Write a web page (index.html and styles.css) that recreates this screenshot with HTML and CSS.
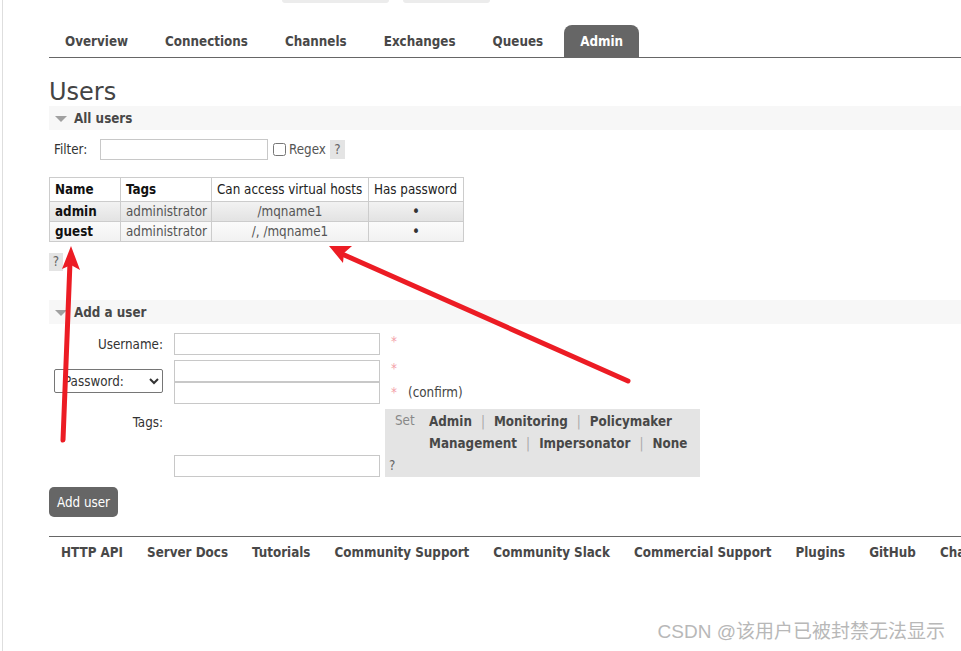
FILE: index.html
```html
<!DOCTYPE html>
<html>
<head>
<meta charset="utf-8">
<link rel="stylesheet" href="styles.css">
</head>
<body>
<div class="page">
  <div class="topstubs"><span class="stub stub-a"></span><span class="stub stub-b"></span></div>
  <ul class="tabs">
    <li>Overview</li>
    <li>Connections</li>
    <li>Channels</li>
    <li>Exchanges</li>
    <li>Queues</li>
    <li class="active">Admin</li>
  </ul>
  <h1>Users</h1>
  <div class="section-head"><span class="tri"></span>All users</div>
  <div class="filter">
    <label>Filter:</label>
    <input type="text" class="filter-input">
    <input type="checkbox" class="cb">
    <span class="regex">Regex</span>
    <span class="help">?</span>
  </div>
  <table class="users">
    <thead>
      <tr><th class="c1 b">Name</th><th class="c2 b">Tags</th><th class="c3">Can access virtual hosts</th><th class="c4">Has password</th></tr>
    </thead>
    <tbody>
      <tr class="alt1"><td class="b name">admin</td><td class="tag">administrator</td><td class="ctr">/mqname1</td><td class="ctr dot">•</td></tr>
      <tr class="alt2"><td class="b name">guest</td><td class="tag">administrator</td><td class="ctr">/, /mqname1</td><td class="ctr dot">•</td></tr>
    </tbody>
  </table>
  <div class="help help-under">?</div>
  <div class="section-head add-head"><span class="tri"></span>Add a user</div>
  <div class="form">
    <div class="lbl">Username:</div>
    <div class="field"><input type="text" class="inp"></div>
    <div class="extra"><span class="star">*</span></div>

    <div class="lbl lbl-select"><select class="sel"><option>Password:</option></select></div>
    <div class="field"><input type="password" class="inp"><input type="password" class="inp"></div>
    <div class="extra pw-extra"><div class="line"><span class="star">*</span></div><div class="line"><span class="star">*</span><span class="confirm">(confirm)</span></div></div>

    <div class="lbl lbl-tags">Tags:</div>
    <div class="field field-bottom"><input type="text" class="inp"></div>
    <div class="tagbox">
      <div class="tagrow">
        <span class="set">Set</span>
        <div class="taglinks">
          <span class="tl">Admin</span><span class="sep">|</span><span class="tl">Monitoring</span><span class="sep">|</span><span class="tl">Policymaker</span><br>
          <span class="tl">Management</span><span class="sep">|</span><span class="tl">Impersonator</span><span class="sep">|</span><span class="tl">None</span>
        </div>
      </div>
      <div class="tag-help">?</div>
    </div>
  </div>
  <button class="btn">Add user</button>
  <div class="footer">
    <span>HTTP API</span><span>Server Docs</span><span>Tutorials</span><span>Community Support</span><span>Community Slack</span><span>Commercial Support</span><span>Plugins</span><span>GitHub</span><span>Changelog</span>
  </div>
</div>
<svg class="arrows" width="961" height="651" viewBox="0 0 961 651">
  <line x1="63" y1="440" x2="70" y2="262" stroke="#ec1c24" stroke-width="5" stroke-linecap="round"/>
  <polygon points="71,246 80,270 71,265 62,269" fill="#ec1c24"/>
  <line x1="628" y1="381" x2="342" y2="254" stroke="#ec1c24" stroke-width="5" stroke-linecap="round"/>
  <polygon points="329,246 352,246 344,253 343,263" fill="#ec1c24"/>
</svg>
<div class="watermark">CSDN @该用户已被封禁无法显示</div>
</body>
</html>
```
FILE: styles.css
```css
html, body {
  margin: 0;
  padding: 0;
  background: #fff;
  overflow: hidden;
  width: 961px;
  height: 651px;
}
body {
  font-family: "DejaVu Sans Condensed", "DejaVu Sans", sans-serif;
  font-stretch: condensed;
  font-size: 13.3px;
  color: #484848;
  position: relative;
}
.page {
  margin-left: 2px;
  border-left: 1px solid #dedede;
  padding-left: 46px;
  min-height: 651px;
  width: 1150px;
  box-sizing: border-box;
}
.topstubs {
  display: flex;
  height: 3px;
}
.stub {
  display: block;
  height: 3px;
  background: #ececec;
  border-radius: 0 0 5px 5px;
}
.stub-a { margin-left: 233px; width: 107px; }
.stub-b { margin-left: 14px; width: 87px; }
.tabs {
  list-style: none;
  margin: 22px 0 0;
  padding: 0;
  display: flex;
  gap: 5px;
  border-bottom: 1px solid #666;
}
.tabs li {
  height: 32px;
  line-height: 33px;
  padding: 0 16px;
  font-weight: bold;
  color: #484848;
  border-radius: 8px 8px 0 0;
}
.tabs li.active {
  background: #666;
  color: #fff;
}
h1 {
  font-family: "DejaVu Sans", sans-serif;
  font-stretch: normal;
  font-weight: normal;
  font-size: 24px;
  line-height: 28px;
  margin: 20px 0 0;
  color: #444;
}
.section-head {
  height: 24px;
  line-height: 25px;
  background: #f7f7f7;
  font-weight: bold;
  color: #484848;
  display: flex;
  align-items: center;
}
.tri {
  width: 0;
  height: 0;
  border-left: 6px solid transparent;
  border-right: 6px solid transparent;
  border-top: 6px solid #a0a0a0;
  margin: 1px 7px 0 6px;
}
.filter {
  margin-top: 9px;
  display: flex;
  align-items: center;
  height: 21px;
  color: #333;
}
.filter label { padding-left: 5px; width: 46px; }
.filter-input {
  width: 168px;
  height: 21px;
  box-sizing: border-box;
  border: 1px solid #c8c8c8;
  margin: 0;
  padding: 0;
}
.cb {
  width: 13px;
  height: 13px;
  margin: 0 3px 0 5px;
}
.regex { color: #555; }
.help {
  display: inline-block;
  background: #e4e4e4;
  color: #666;
  width: 15px;
  height: 19px;
  line-height: 19px;
  text-align: center;
  margin-left: 4px;
}
.users {
  margin-top: 17px;
  border-collapse: collapse;
  table-layout: fixed;
  width: 415px;
}
.users th, .users td {
  border: 1px solid #cccccc;
  padding: 0 5px;
  white-space: nowrap;
  overflow: hidden;
}
.users th {
  height: 23px;
  font-weight: normal;
  text-align: left;
  color: #222;
}
.users th.b, .users td.b { font-weight: bold; color: #111; }
.users th.c1 { width: 60px; }
.users th.c2 { width: 80px; }
.users th.c3 { width: 146px; }
.users th.c4 { width: 84px; }
.users td { height: 19px; color: #555; }
.users td.ctr { text-align: center; color: #555; }
.users td.dot { color: #333; font-size: 15px; }
.alt1 { background: linear-gradient(#f2f2f2, #e2e2e2); }
.alt2 { background: linear-gradient(#fbfbfb, #f1f1f1); }
.help-under {
  display: block;
  margin: 11px 0 0;
  width: 14px;
  height: 18px;
  line-height: 18px;
}
.add-head { margin-top: 29px; }
.form {
  margin-top: 9px;
  display: grid;
  grid-template-columns: 125px 211px auto;
  row-gap: 5px;
  color: #333;
}
.lbl {
  text-align: right;
  padding-right: 11px;
  line-height: 24px;
  height: 22px;
}
.lbl-select {
  display: flex;
  justify-content: flex-end;
  align-items: center;
  height: auto;
  padding-bottom: 2px;
}
.sel {
  width: 109px;
  height: 24px;
  font-family: "DejaVu Sans Condensed", "DejaVu Sans", sans-serif;
  font-stretch: condensed;
  font-size: 13.3px;
  color: #333;
  border: 1px solid #767676;
  border-radius: 2px;
  background: #fff;
  margin: 0;
  padding-left: 5px;
}
.lbl-tags { padding-top: 2px; }
.field { display: flex; flex-direction: column; }
.field-bottom { justify-content: flex-end; }
.inp {
  width: 206px;
  height: 22px;
  box-sizing: border-box;
  border: 1px solid #c8c8c8;
  margin: 0;
  padding: 0;
}
.extra { line-height: 18px; height: 22px; }
.pw-extra { height: auto; }
.line { height: 22px; line-height: 18px; }
.pw-extra .line:last-child { line-height: 22px; }
.star { color: #f3a0a8; padding-left: 6px; }
.confirm { padding-left: 11px; color: #444; }
.tagbox {
  background: #e4e4e4;
  width: 315px;
  height: 68px;
  box-sizing: border-box;
  padding: 2px 4px 0 4px;
  display: flex;
  flex-direction: column;
  justify-content: space-between;
}
.tagrow { display: flex; }
.set {
  color: #888;
  width: 40px;
  padding-left: 6px;
  box-sizing: border-box;
  line-height: 20px;
  flex: none;
}
.taglinks { line-height: 22px; white-space: nowrap; }
.tl { font-weight: bold; color: #484848; }
.sep { color: #aaa; padding: 0 9px; }
.tag-help { color: #666; line-height: 20px; padding-bottom: 1px; }
.btn {
  display: block;
  margin-top: 10px;
  width: 69px;
  height: 30px;
  background: #666;
  color: #fff;
  border: 0;
  border-radius: 5px;
  font-family: "DejaVu Sans Condensed", "DejaVu Sans", sans-serif;
  font-stretch: condensed;
  font-size: 13.3px;
  padding: 0;
}
.footer {
  margin-top: 19px;
  border-top: 1px solid #666;
  display: flex;
  padding-top: 6px;
  white-space: nowrap;
}
.footer span {
  font-weight: bold;
  color: #484848;
  padding: 0 12px;
  line-height: 20px;
}
.arrows {
  position: absolute;
  left: 0;
  top: 0;
  pointer-events: none;
}
.watermark {
  position: absolute;
  right: 16px;
  bottom: 8px;
  font-family: "Liberation Sans", "Noto Sans CJK SC", sans-serif;
  font-stretch: normal;
  font-size: 19px;
  color: #b8b8b8;
}
```
